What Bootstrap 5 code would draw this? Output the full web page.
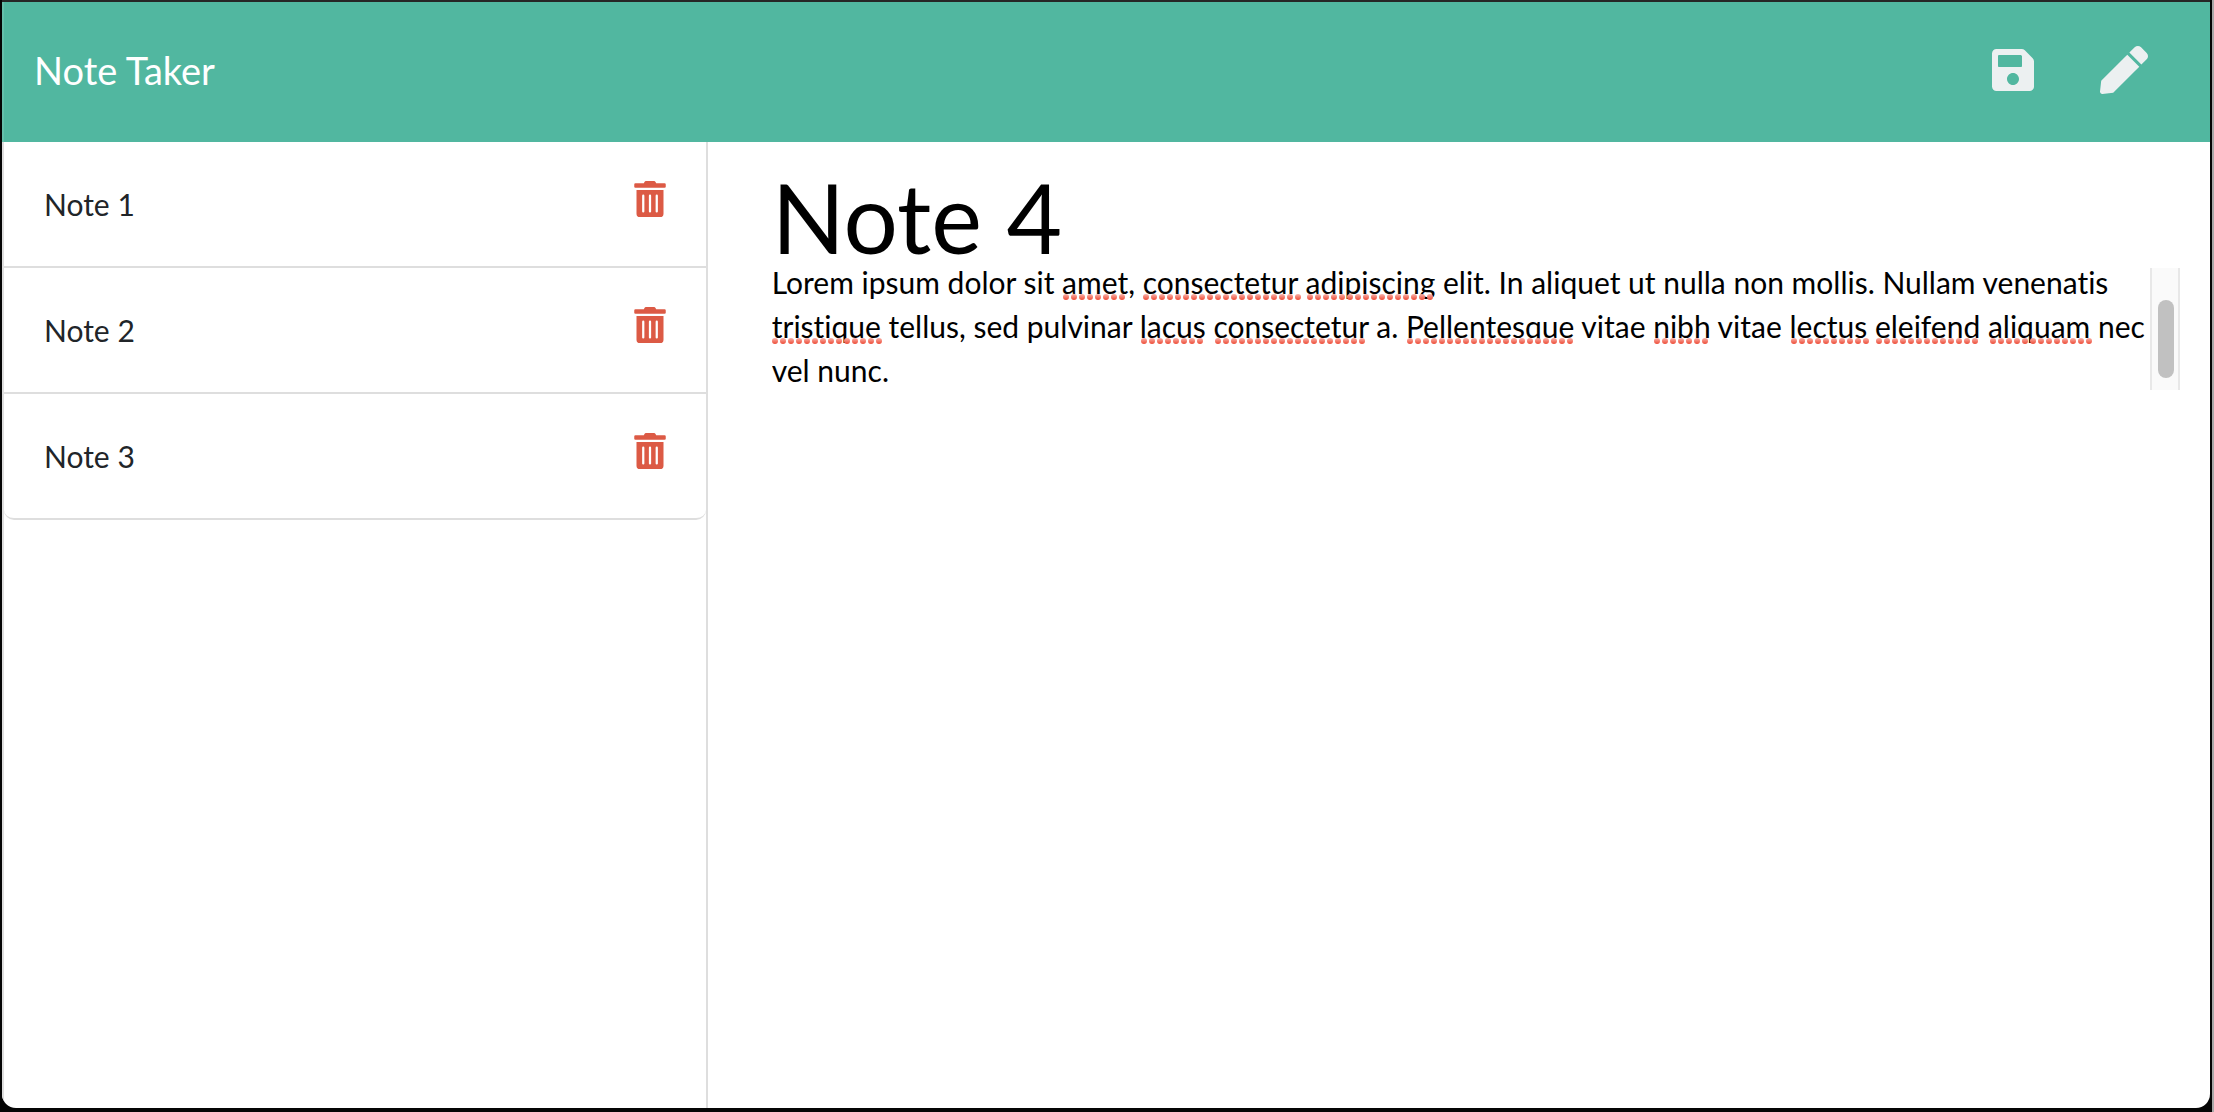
<!DOCTYPE html>
<html lang="en">
<head>
<meta charset="utf-8">
<meta name="viewport" content="width=device-width, initial-scale=1">
<title>Note Taker</title>
<link href="https://cdn.jsdelivr.net/npm/bootstrap@5.3.0/dist/css/bootstrap.min.css" rel="stylesheet">
<style>
body { font-family: Lato, sans-serif; font-size: 30px; line-height: 44px; font-variant-ligatures: none; color: #212529; background: linear-gradient(90deg, #050505 calc(100% - 2px), #a8a8a8 calc(100% - 2px)); }
.app-window { margin: 0 4px 4px 2px; border-top: 2px solid #262626; border-radius: 0 0 14px 14px; overflow: hidden; background: #fff; }
.app-bar { background: #51b7a0; height: 140px; padding: 0 62px 4px 30px; border-left: 2px solid #65bfab; }
.app-title { font-size: 38px; line-height: 56px; color: #fff; }
.icon-btn { background: none; border: 0; padding: 0; line-height: 0; color: #ecf0f1; }
.icon-btn svg { display: block; fill: currentColor; }
.bar-tools { gap: 66px; }
.app-body { border-left: 2px solid #dedede; }
.side { width: 31.9%; border-right: 2px solid #dedede; }
.side .list-group { --bs-list-group-border-color: #dedede; --bs-list-group-border-width: 0; --bs-list-group-border-radius: 0; }
.side .list-group-item { height: 126px; padding: 0 40px; border-bottom: 2px solid #dedede; color: #212529; }
.side .list-group-item:last-child { border-radius: 0 0 10px 10px; }
.side .icon-btn { color: #dc5a45; margin-bottom: 10px; }
.editor { padding: 30px 30px 0 64px; }
.note-title, .note-text { border: 0; padding: 0; margin: 0; background: transparent; color: #000; outline: 0; border-radius: 0; font-variant-ligatures: none; }
.note-title { height: 88px; line-height: 88px; font-size: 96px; }
.note-text { height: 132px; font-size: 30px; line-height: 44px; resize: none; overflow: hidden; }
.marks { position: absolute; left: 0; top: 0; pointer-events: none; }
.track { width: 30px; height: 122px; margin-top: 8px; padding: 32px 0 0 6px; background: #fafafa; border: solid #e8e8e8; border-width: 0 2px; }
.thumb { width: 16px; height: 78px; border-radius: 8px; background: #c1c1c1; }
</style>
<script src="https://cdn.jsdelivr.net/npm/bootstrap@5.3.0/dist/js/bootstrap.bundle.min.js"></script>
</head>
<body class="d-flex flex-column vh-100">
<svg width="0" height="0" class="d-none">
  <symbol id="trash" viewBox="0 0 448 512"><path d="M32 464a48 48 0 0 0 48 48h288a48 48 0 0 0 48-48V128H32zm272-256a16 16 0 0 1 32 0v224a16 16 0 0 1-32 0zm-96 0a16 16 0 0 1 32 0v224a16 16 0 0 1-32 0zm-96 0a16 16 0 0 1 32 0v224a16 16 0 0 1-32 0zM432 32H312l-9.400-18.700A24 24 0 0 0 281.100 0H166.800a23.720 23.720 0 0 0-21.400 13.300L136 32H16A16 16 0 0 0 0 48v32a16 16 0 0 0 16 16h416a16 16 0 0 0 16-16V48a16 16 0 0 0-16-16z"/></symbol>
</svg>
<div class="app-window d-flex flex-column flex-grow-1">
  <nav class="app-bar d-flex align-items-center justify-content-between">
    <a class="app-title text-decoration-none" href="#">Note Taker</a>
    <div class="bar-tools d-flex align-items-center">
      <button class="icon-btn" type="button" aria-label="Save note"><svg width="42" height="48" viewBox="0 0 448 512"><path d="M433.941 129.941l-83.882-83.882A48 48 0 0 0 316.118 32H48C21.490 32 0 53.490 0 80v352c0 26.510 21.490 48 48 48h352c26.510 0 48-21.490 48-48V163.882a48 48 0 0 0-14.059-33.941zM224 416c-35.346 0-64-28.654-64-64 0-35.346 28.654-64 64-64s64 28.654 64 64c0 35.346-28.654 64-64 64zm96-304.520V212c0 6.627-5.373 12-12 12H76c-6.627 0-12-5.373-12-12V108c0-6.627 5.373-12 12-12h228.520c3.183 0 6.235 1.264 8.485 3.515l3.480 3.480A11.996 11.996 0 0 1 320 111.480z"/></svg></button>
      <button class="icon-btn" type="button" aria-label="New note"><svg width="48" height="48" viewBox="0 0 512 512"><path d="M290.740 93.240l128.020 128.020-277.990 277.990-114.140 12.600C11.350 513.540-1.560 500.620.140 485.340l12.700-114.220 277.900-277.880zm207.200-19.060l-60.110-60.110c-18.750-18.750-49.160-18.750-67.910 0l-56.550 56.550 128.020 128.020 56.550-56.550c18.750-18.760 18.750-49.160 0-67.910z"/></svg></button>
    </div>
  </nav>
  <div class="app-body d-flex flex-grow-1">
    <aside class="side flex-shrink-0">
      <ul class="list-group">
        <li class="list-group-item d-flex align-items-center justify-content-between"><span>Note 1</span><button class="icon-btn" type="button" aria-label="Delete Note 1"><svg width="32" height="36"><use href="#trash"/></svg></button></li>
        <li class="list-group-item d-flex align-items-center justify-content-between"><span>Note 2</span><button class="icon-btn" type="button" aria-label="Delete Note 2"><svg width="32" height="36"><use href="#trash"/></svg></button></li>
        <li class="list-group-item d-flex align-items-center justify-content-between"><span>Note 3</span><button class="icon-btn" type="button" aria-label="Delete Note 3"><svg width="32" height="36"><use href="#trash"/></svg></button></li>
      </ul>
    </aside>
    <main class="editor flex-grow-1">
      <input class="note-title d-block w-100" type="text" value="Note 4" aria-label="Note title">
      <div class="d-flex">
        <div class="position-relative flex-grow-1">
          <textarea class="note-text d-block w-100" aria-label="Note text" spellcheck="false">Lorem ipsum dolor sit amet, consectetur adipiscing elit. In aliquet ut nulla non mollis. Nullam venenatis tristique tellus, sed pulvinar lacus consectetur a. Pellentesque vitae nibh vitae lectus eleifend aliquam nec vel nunc.</textarea>
          <svg class="marks" width="1340" height="88" aria-hidden="true" fill="none" stroke-width="6" stroke-linecap="round" stroke-dasharray="0 8">
            <defs>
              <linearGradient id="m1" gradientUnits="userSpaceOnUse" x1="0" x2="0" y1="34" y2="40"><stop stop-color="#f9b4ab"/><stop offset="1" stop-color="#ee4a35"/></linearGradient>
              <linearGradient id="m2" gradientUnits="userSpaceOnUse" x1="0" x2="0" y1="78" y2="84"><stop stop-color="#f9b4ab"/><stop offset="1" stop-color="#ee4a35"/></linearGradient>
            </defs>
            <path stroke="url(#m1)" d="M294 37h57M374 37h153M538 37h121"/>
            <path stroke="url(#m2)" d="M3 81h105M372 81h57M446 81h145M638 81h161M885 81h49M1022 81h73M1107 81h97M1221 81h97"/>
          </svg>
        </div>
        <div class="track flex-shrink-0"><div class="thumb"></div></div>
      </div>
    </main>
  </div>
</div>
</body>
</html>
